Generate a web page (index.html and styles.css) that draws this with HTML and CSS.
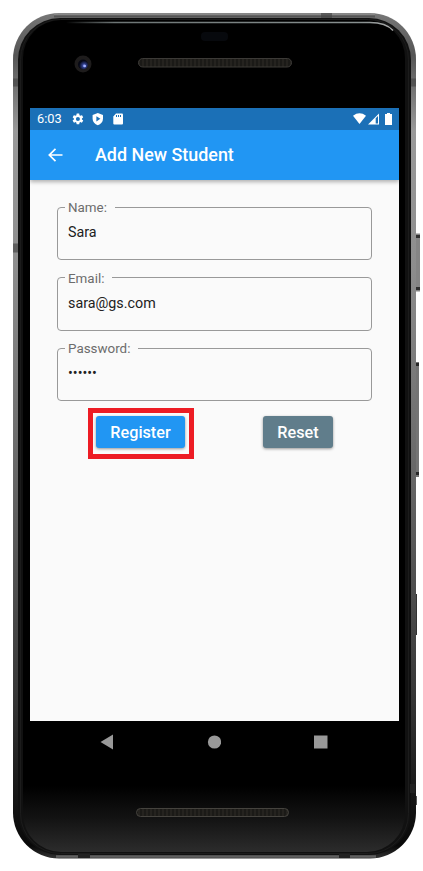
FILE: index.html
```html
<!DOCTYPE html>
<html lang="en">
<head>
<meta charset="utf-8">
<title>Add New Student</title>
<link rel="stylesheet" href="styles.css">
</head>
<body>
<div class="phone">
  <svg class="frame" width="423" height="871" viewBox="0 0 423 871" aria-hidden="true">
    <defs>
      <linearGradient id="metal" x1="0" y1="0" x2="0" y2="1">
        <stop offset="0" stop-color="#777"/><stop offset=".05" stop-color="#555"/><stop offset=".14" stop-color="#999"/>
        <stop offset=".3" stop-color="#8d8d8d"/><stop offset=".55" stop-color="#666"/><stop offset=".8" stop-color="#383838"/>
        <stop offset=".93" stop-color="#161616"/><stop offset=".985" stop-color="#080808"/><stop offset="1" stop-color="#333"/>
      </linearGradient>
      <linearGradient id="glass" x1="0" y1="0" x2="0" y2="1">
        <stop offset="0" stop-color="#000"/><stop offset=".92" stop-color="#000"/><stop offset=".96" stop-color="#131313"/><stop offset="1" stop-color="#2c2c2c"/>
      </linearGradient>
      <linearGradient id="shine" gradientUnits="userSpaceOnUse" x1="66" y1="0" x2="393" y2="0"><stop offset="0" stop-color="#8a9292" stop-opacity="0"/><stop offset=".15" stop-color="#6d7575"/><stop offset=".9" stop-color="#889090"/><stop offset="1" stop-color="#aaa"/></linearGradient>
      <pattern id="mesh" width="4" height="4" patternUnits="userSpaceOnUse"><rect width="4" height="4" fill="#25231f"/><path d="M1 0v4" stroke="#11100e"/></pattern>
      <radialGradient id="lens" cx=".62" cy=".62"><stop offset="0" stop-color="#8e9fff"/><stop offset=".35" stop-color="#31408c"/><stop offset="1" stop-color="#060814"/></radialGradient>
    </defs>
    <g>
      <rect x="415" y="233.500" width="5" height="58" fill="#858585"/><path d="M416 235h4v3h-4zM416 287h4v3h-4z" fill="#303030"/>
      <rect x="415" y="362" width="4" height="115" fill="#747474"/><path d="M415 363h4v3h-4zM415 472h4v3h-4z" fill="#282828"/>
      <rect x="415" y="594" width="2" height="41" fill="#333"/><rect x="415" y="796" width="2" height="9" fill="#555"/>
    </g>
    <rect x="13" y="13" width="403" height="845.500" rx="46" fill="url(#metal)"/>
    <path d="M54 14h321" stroke="#999"/>
    <path d="M54 16.500h321" stroke="#555" stroke-width="2"/>
    <path d="M13 78.500h6v8h-6zM13 243.500h6v9h-6zM409 78.500h7v8h-7zM321 13h11v5h-11z" fill="#444" fill-opacity=".65"/>
    <rect x="18" y="18" width="393" height="837" rx="42" fill="#111"/>
    <rect x="20.500" y="19.500" width="388" height="834" rx="40" fill="none" stroke="#1c1c1c"/>
    <rect x="23" y="20" width="382" height="832" rx="38" fill="url(#glass)"/>
    <path d="M66 22.500h304q16 0 23 8" fill="none" stroke="url(#shine)" stroke-width="1.500"/>
    <path d="M56 856.500h320" stroke="#606060" stroke-width="2.500"/>
    <path d="M78 854h12v4h-12zM339 854h11v4h-11zM410 784h5v9h-5z" fill="#222"/>
    <rect x="201" y="32" width="27" height="9" rx="4" fill="#07090d"/>
    <circle cx="83" cy="64" r="8.500" fill="#1e1c1c"/><circle cx="83" cy="64.500" r="5" fill="url(#lens)"/><circle cx="84.700" cy="66" r="1.300" fill="#a4b2ff"/>
    <rect x="138.500" y="58.500" width="153" height="8.500" rx="4.200" fill="url(#mesh)" stroke="#3c3a37"/>
    <rect x="136.500" y="808.500" width="152" height="8" rx="4" fill="url(#mesh)" stroke="#45433e"/>
  </svg>
  <main class="screen">
    <div class="status">
      <span class="clock">6:03</span>
      <svg class="status-left" width="54" height="14" viewBox="0 0 54 14" fill="#fff">
        <g transform="translate(.2 .2) scale(.56)"><path d="M19.140 12.940a7 7 0 0 0 0-1.880l2.030-1.580a.5.5 0 0 0 .12-.61l-1.920-3.320a.5.500 0 0 0-.59-.22l-2.390.96a7 7 0 0 0-1.620-.94l-.36-2.540a.5.500 0 0 0-.48-.41h-3.840a.5.500 0 0 0-.47.41l-.36 2.540a7 7 0 0 0-1.620.94l-2.390-.96a.5.500 0 0 0-.59.220L2.740 8.870a.5.500 0 0 0 .12.610l2.030 1.580a7 7 0 0 0 0 1.880l-2.030 1.580a.5.500 0 0 0-.12.610l1.920 3.320c.12.220.37.290.59.220l2.390-.96c.5.380 1.030.7 1.620.94l.36 2.540c.5.240.24.410.48.410h3.840c.24 0 .44-.17.470-.41l.36-2.540a7 7 0 0 0 1.620-.94l2.390.96c.22.080.47 0 .59-.22l1.920-3.320a.5.500 0 0 0-.12-.61zM12 15.600a3.600 3.600 0 1 1 0-7.200 3.600 3.600 0 0 1 0 7.200z" fill-rule="evenodd"/></g>
        <path d="M26.800.9l5.200 2v3.900c0 3-2.200 5.500-5.200 6.400-3-.9-5.200-3.400-5.200-6.400V2.900z"/><path d="M25.400 4.200v5.200l4-2.600z" fill="#1b70b7"/>
        <path d="M45 1.500h6q1 0 1 1v9q0 1-1 1h-7.700q-1 0-1-1V4.600z"/><path d="M45 3h1v2h-1zM47 3h1v2h-1zM49 3h1v2h-1z" fill="#1b70b7"/>
      </svg>
      <svg class="status-right" width="40" height="14" viewBox="0 0 40 14" fill="#fff">
        <path d="M0 3.700Q6.500-1 13 3.700L6.500 12z"/><path d="M26 1.500V12.500H15z"/><path d="M22.700 6.200L25 3.900v7.600h-2.300z" fill="#1b70b7"/>
        <path d="M32 2h2V1h3v1h2v11h-7z"/>
      </svg>
    </div>
    <header class="appbar">
      <svg width="16" height="14" viewBox="0 0 16 14" fill="none" stroke="#fff" stroke-width="1.700"><path d="M14.500 7H1.500M7.500 .8L1.300 7l6.200 6.200"/></svg>
      <h1>Add New Student</h1>
    </header>
    <form class="form">
      <fieldset><legend>Name:</legend><div class="value">Sara</div></fieldset>
      <fieldset><legend>Email:</legend><div class="value">sara@gs.com</div></fieldset>
      <fieldset><legend>Password:</legend><div class="value">••••••</div></fieldset>
      <div class="actions">
        <div class="highlight"><button type="button" class="btn register">Register</button></div>
        <button type="button" class="btn reset">Reset</button>
      </div>
    </form>
  </main>
  <nav class="nav">
    <svg width="14" height="16" viewBox="0 0 14 16"><path d="M.5 8L13 .5v15z"/></svg>
    <svg width="14" height="14" viewBox="0 0 14 14"><circle cx="7.500" cy="7" r="6.600"/></svg>
    <svg width="14" height="14" viewBox="0 0 14 14"><path d="M0 .5h13.500v13H0z"/></svg>
  </nav>
</div>
</body>
</html>
```
FILE: styles.css
```css
* { box-sizing: border-box; }
body { margin: 0; background: #fff; font-family: Roboto, "Liberation Sans", sans-serif; }
svg { display: block; flex: none; }
.phone { position: relative; width: 423px; height: 871px; padding: 108px 24px 0 30px; overflow: hidden; }
.frame { position: absolute; left: 0; top: 0; }
.screen { position: relative; height: 613px; background: #fafafa; }
.status { display: flex; align-items: center; height: 22px; padding: 0 6px 0 7px; background: #1b70b7; color: #fff; }
.clock { width: 34px; font-size: 12.800px; line-height: 22px; }
.status-right { margin-left: auto; }
.appbar { display: flex; align-items: center; gap: 31px; height: 50px; padding-left: 18px; background: #2196f3; color: #fff; box-shadow: 0 2px 4px rgba(0,0,0,.3); clip-path: inset(0 0 -8px); }
h1 { margin: 0; font-size: 17.900px; font-weight: 500; line-height: 24px; }
.form { padding: 20px 27px 0; }
fieldset { height: 60px; min-width: 0; margin: 0 0 10.700px; padding: 0 0 0 10px; border: 1px solid #999; border-radius: 4px; }
legend { height: 14px; margin-left: -3px; padding: 0 8px 0 3px; color: #6c6c6c; font-size: 13.400px; line-height: 15px; }
.value { margin-top: 9px; color: #212121; font-size: 14.300px; line-height: 18px; }
.actions { display: flex; justify-content: space-between; align-items: flex-start; margin-top: -4px; padding: 0 39px 0 31px; }
.highlight { width: 106px; height: 51px; padding: 3px; border: 5px solid #ed1c24; }
.btn { display: block; height: 32px; padding: 1px 0 0; border: 0; border-radius: 3px; color: #fff; font: 500 16.200px/32px Roboto, "Liberation Sans", sans-serif; box-shadow: 0 1px 3px rgba(0,0,0,.4); }
.register { width: 89px; background: #2196f3; }
.reset { width: 70px; margin-top: 8px; background: #607d8b; }
.nav { position: relative; display: flex; justify-content: space-between; align-items: center; height: 43px; padding: 0 71px 1px 70px; fill: #999; }
```
